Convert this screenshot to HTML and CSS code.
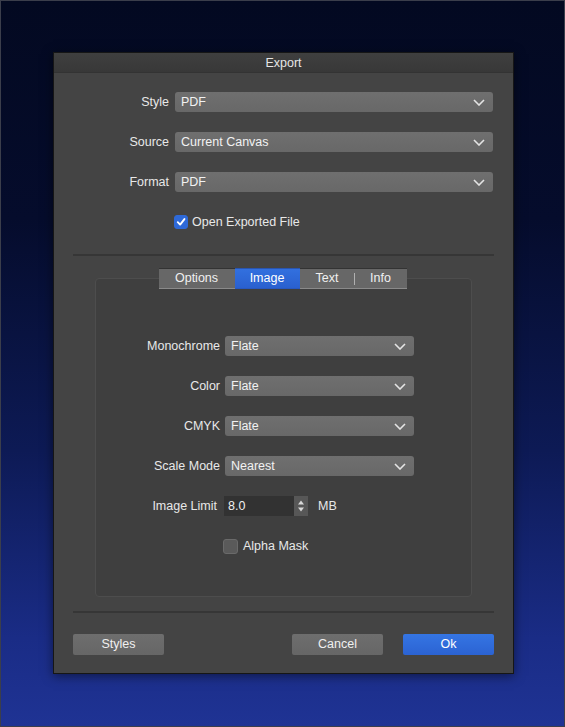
FILE: index.html
```html
<!DOCTYPE html>
<html>
<head>
<meta charset="utf-8">
<link rel="stylesheet" href="styles.css">
</head>
<body>
<div class="screen">
  <div class="dialog">
    <div class="titlebar">Export</div>
    <div class="form">
      <div class="label">Style</div>
      <div class="select"><span>PDF</span><svg class="chev" viewBox="0 0 12 7"><path d="M1 1 L6 6 L11 1"/></svg></div>
      <div class="label">Source</div>
      <div class="select"><span>Current Canvas</span><svg class="chev" viewBox="0 0 12 7"><path d="M1 1 L6 6 L11 1"/></svg></div>
      <div class="label">Format</div>
      <div class="select"><span>PDF</span><svg class="chev" viewBox="0 0 12 7"><path d="M1 1 L6 6 L11 1"/></svg></div>
      <div class="check-row">
        <span class="checkbox checked"><svg viewBox="0 0 14 14"><path d="M3.2 7.2 L6 10 L11 3.6"/></svg></span>
        <span>Open Exported File</span>
      </div>
    </div>
    <div class="sep sep-top"></div>
    <div class="group">
      <div class="tabs">
        <div class="tab t-options">Options</div>
        <div class="tab t-image active">Image</div>
        <div class="tab t-text">Text</div>
        <div class="tab t-info">Info</div>
      </div>
      <div class="box">
        <div class="inner-form">
          <div class="label">Monochrome</div>
          <div class="select"><span>Flate</span><svg class="chev" viewBox="0 0 12 7"><path d="M1 1 L6 6 L11 1"/></svg></div>
          <div class="label">Color</div>
          <div class="select"><span>Flate</span><svg class="chev" viewBox="0 0 12 7"><path d="M1 1 L6 6 L11 1"/></svg></div>
          <div class="label">CMYK</div>
          <div class="select"><span>Flate</span><svg class="chev" viewBox="0 0 12 7"><path d="M1 1 L6 6 L11 1"/></svg></div>
          <div class="label">Scale Mode</div>
          <div class="select"><span>Nearest</span><svg class="chev" viewBox="0 0 12 7"><path d="M1 1 L6 6 L11 1"/></svg></div>
          <div class="label label-limit">Image Limit</div>
          <div class="limit">
            <div class="input">8.0</div>
            <div class="stepper"><svg viewBox="0 0 14 20"><path d="M7 4.5 L10 8.5 L4 8.5 Z"/><path d="M7 15.5 L10 11.5 L4 11.5 Z"/></svg></div>
            <span class="unit">MB</span>
          </div>
          <div class="check-row">
            <span class="checkbox"></span>
            <span>Alpha Mask</span>
          </div>
        </div>
      </div>
    </div>
    <div class="sep sep-bottom"></div>
    <div class="buttons">
      <div class="btn">Styles</div>
      <div class="spacer"></div>
      <div class="btn">Cancel</div>
      <div class="btn primary">Ok</div>
    </div>
  </div>
</div>
</body>
</html>
```
FILE: styles.css
```css
* { box-sizing: border-box; }
html, body { margin: 0; padding: 0; }
body {
  font-family: "Liberation Sans", Arial, sans-serif;
  font-size: 12.5px;
  color: #e8e8e8;
}
.screen {
  width: 565px;
  height: 727px;
  border: 1px solid #3b3e4b;
  padding: 51px 0 0 52px;
  background: linear-gradient(180deg, #030921 0%, #050c2c 30%, #0d1a55 62%, #1a2c86 88%, #1f3394 100%);
}
.dialog {
  width: 461px;
  height: 622px;
  background: #444444;
  border: 1px solid #161616;
  box-shadow: 0 2px 10px rgba(0,0,0,0.5);
  display: flex;
  flex-direction: column;
}
.titlebar {
  height: 20px;
  line-height: 20px;
  text-align: center;
  font-size: 12.5px;
  color: #e6e6e6;
  background: linear-gradient(180deg, #3f3f3f, #383838);
  border-bottom: 1px solid #333;
}
.form {
  display: grid;
  grid-template-columns: 115px 318px;
  column-gap: 6px;
  row-gap: 20px;
  padding-top: 19px;
}
.label {
  height: 20px;
  line-height: 20px;
  text-align: right;
  white-space: nowrap;
}
.select {
  height: 20px;
  border-radius: 3px;
  background: linear-gradient(180deg, #6f6f6f, #686868);
  display: flex;
  align-items: center;
  justify-content: space-between;
  padding: 0 8px 0 6px;
  color: #f2f2f2;
}
.chev {
  width: 12px;
  height: 7px;
}
.chev path {
  fill: none;
  stroke: #e4e4e4;
  stroke-width: 1.6;
}
.check-row {
  grid-column: 2;
  height: 20px;
  display: flex;
  align-items: center;
  gap: 4px;
}
.checkbox {
  width: 14px;
  height: 14px;
  border-radius: 3px;
  background: #5a5a5a;
  border: 1px solid #6a6a6a;
  display: inline-block;
}
.checkbox.checked {
  background: #2e69d8;
  border-color: #2e69d8;
  margin-left: -1px;
}
.checkbox svg { width: 12px; height: 12px; display: block; }
.checkbox svg path {
  fill: none;
  stroke: #ffffff;
  stroke-width: 2.2;
  stroke-linecap: round;
  stroke-linejoin: round;
}
.sep {
  margin: 0 19px;
  height: 2px;
  background: #363636;
}
.sep-top { margin-top: 22px; }
.group {
  margin: 12px 41px 0 41px;
}
.tabs {
  display: flex;
  justify-content: center;
  height: 21px;
  position: relative;
  z-index: 1;
  margin-left: -2px;
}
.tab {
  height: 21px;
  line-height: 19px;
  text-align: center;
  background: #676767;
  border-top: 1px solid #333;
  border-bottom: 1px solid #8a8a8a;
  color: #f0f0f0;
}
.t-options { width: 76px; }
.t-image { width: 65px; }
.t-text { width: 55px; position: relative; }
.t-info { width: 52px; }
.t-text::after {
  content: "";
  position: absolute;
  right: 0;
  top: 4px;
  width: 1px;
  height: 12px;
  background: #b0b0b0;
}
.tab.active {
  background: linear-gradient(180deg, #3270df, #2a60cf);
  border-bottom-color: #2858c0;
  border-top-color: #2a55b0;
  color: #fff;
}
.box {
  margin-top: -11px;
  height: 319px;
  border: 1px solid #4d4d4d;
  border-radius: 4px;
  background: #3f3f3f;
  padding-top: 57px;
}
.inner-form {
  display: grid;
  grid-template-columns: 124px 189px;
  column-gap: 5px;
  row-gap: 20px;
}
.label-limit { padding-right: 3px; }
.limit {
  height: 20px;
  display: flex;
  align-items: center;
  margin-left: -1px;
}
.input {
  width: 70px;
  height: 20px;
  line-height: 20px;
  background: #323232;
  padding-left: 4px;
  color: #f0f0f0;
}
.stepper {
  width: 14px;
  height: 20px;
  background: #575757;
}
.stepper svg { width: 14px; height: 20px; display: block; }
.stepper path { fill: #d8d8d8; }
.unit { margin-left: 10px; }
.inner-form .check-row { gap: 5px; }
.inner-form .checkbox { width: 15px; height: 15px; margin-left: -2px; }
.sep-bottom { margin-top: 14px; }
.buttons {
  display: flex;
  padding: 0 19px;
  margin-top: 21px;
  gap: 20px;
}
.spacer { flex: 1; }
.btn {
  width: 91px;
  height: 21px;
  line-height: 21px;
  text-align: center;
  border-radius: 2px;
  background: linear-gradient(180deg, #6e6e6e, #666666);
  color: #f0f0f0;
}
.btn.primary {
  background: linear-gradient(180deg, #3575e3, #2b63d3);
  color: #fff;
}
```
